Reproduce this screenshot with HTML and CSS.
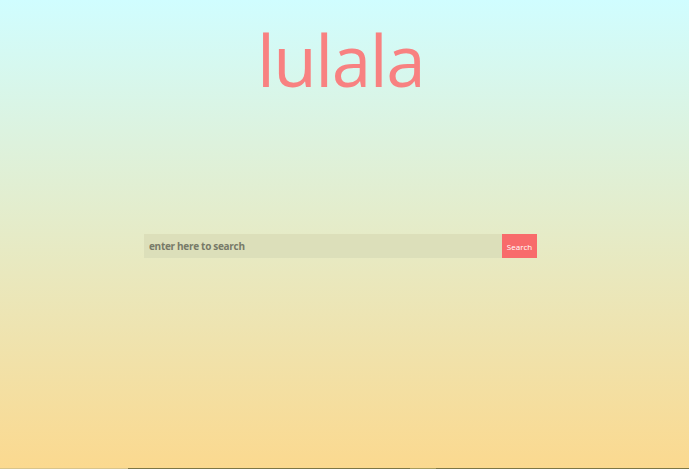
FILE: index.html
```html
<!DOCTYPE html>
<html>
<head>
<meta charset="utf-8">
<link rel="stylesheet" href="styles.css">
</head>
<body>
<div class="page">
  <h1 class="title">lulala</h1>
  <form class="search">
    <input class="search-input" type="text" placeholder="enter here to search">
    <button class="search-btn" type="button">Search</button>
  </form>
</div>
<div class="bottom-line">
  <span class="seg seg-light"></span>
  <span class="seg seg-dark seg-a"></span>
  <span class="seg seg-mid"></span>
  <span class="seg seg-dark seg-b"></span>
</div>
</body>
</html>
```
FILE: styles.css
```css
html, body {
  margin: 0;
  padding: 0;
  height: 469px;
  overflow: hidden;
}
body {
  background: linear-gradient(to bottom, #d0fdff 0%, #fbd98f 100%);
  font-family: "Open Sans", "Noto Sans", sans-serif;
  display: flex;
  flex-direction: column;
}
.page {
  flex: 1;
  display: flex;
  flex-direction: column;
  align-items: center;
  padding-right: 8px;
}
.title {
  margin: 5px 0 0 0;
  font-weight: 400;
  font-size: 71px;
  line-height: 110px;
  color: #f88181;
  letter-spacing: -1.5px;
}
.search {
  margin-top: 119px;
  display: flex;
  height: 24px;
}
.search-input {
  width: 358px;
  height: 24px;
  box-sizing: border-box;
  border: none;
  outline: none;
  background: #dcdfba;
  padding: 0 5px;
  font-family: "Open Sans", sans-serif;
  font-size: 10px;
  font-weight: 700;
  letter-spacing: -0.3px;
  color: #777;
}
.search-input::placeholder {
  color: #777a68;
}
.search-btn {
  width: 35px;
  height: 24px;
  border: none;
  background: #f86b6b;
  color: #fff;
  font-family: "Open Sans", sans-serif;
  font-size: 8px;
  padding: 0;
}
.bottom-line {
  display: flex;
  height: 1px;
}
.seg { display: block; height: 1px; }
.seg-light { width: 128px; background: #d8c48c; }
.seg-dark { background: #7d7646; }
.seg-a { width: 282px; }
.seg-mid { width: 26px; background: #a89c5e; }
.seg-b { flex: 1; }
```
